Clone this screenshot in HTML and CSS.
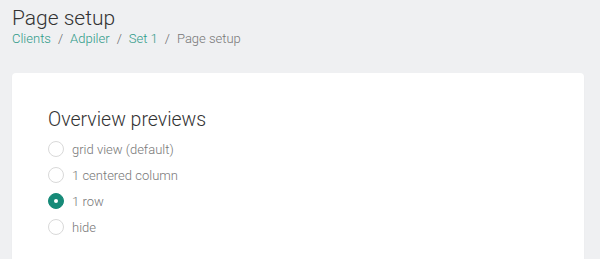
FILE: index.html
```html
<!DOCTYPE html>
<html lang="en">
<head>
    <meta charset="UTF-8">
    <meta name="viewport" content="width=device-width, initial-scale=1.0">
    <title>Page setup</title>
    <link rel="stylesheet" href="styles.css">
</head>
<body>
    <header class="page_head">
        <h1>Page setup</h1>
        <nav class="crumbs">
            <a href="#">Clients</a>
            <span class="sep">/</span>
            <a href="#">Adpiler</a>
            <span class="sep">/</span>
            <a href="#">Set 1</a>
            <span class="sep">/</span>
            <span class="current">Page setup</span>
        </nav>
    </header>

    <section class="card">
        <h2>Overview previews</h2>
        <form class="options">
            <label class="option"><input type="radio" name="preview" value="grid"><span class="dot"></span>grid view (default)</label>
            <label class="option"><input type="radio" name="preview" value="column"><span class="dot"></span>1 centered column</label>
            <label class="option"><input type="radio" name="preview" value="row" checked><span class="dot"></span>1 row</label>
            <label class="option"><input type="radio" name="preview" value="hide"><span class="dot"></span>hide</label>
        </form>
    </section>
</body>
</html>
```

FILE: styles.css
```css
body{
    margin: 0;
    padding: 0 16px 0 12px;
    background-color: #eff0f2;
    font-family: Roboto, "Liberation Sans", sans-serif;
    font-weight: 300;
    color: #333;
}

h1{
    font-size: 21px;
    font-weight: 300;
    line-height: 25px;
    margin: 0;
    padding-top: 6px;
    color: #333;
}

.crumbs{
    display: flex;
    font-size: 13px;
    line-height: 16px;
    color: #777;
}
.crumbs a{
    color: #2e9a88;
    text-decoration: none;
}
.sep{
    margin: 0 7px;
    color: #666;
}

.card{
    margin-top: 26px;
    background-color: white;
    border-radius: 4px;
    padding: 35px 36px 40px;
    box-shadow: 0 1px 2px rgba(0,0,0,0.04);
}

h2{
    font-size: 19.5px;
    font-weight: 300;
    line-height: 24px;
    margin: 0 0 4px;
    color: #333;
}

.options{
    display: flex;
    flex-direction: column;
}
.option{
    display: flex;
    align-items: center;
    gap: 8px;
    height: 26px;
    font-size: 13px;
    color: #777;
    cursor: pointer;
}
.option input{
    display: none;
}
.dot{
    box-sizing: border-box;
    width: 16px;
    height: 16px;
    border: 1px solid #d9d9d9;
    border-radius: 50%;
    display: flex;
    align-items: center;
    justify-content: center;
}
.option input:checked + .dot{
    background-color: #168a78;
    border-color: #168a78;
}
.option input:checked + .dot::after{
    content: "";
    width: 4px;
    height: 4px;
    border-radius: 50%;
    background-color: white;
}
```
